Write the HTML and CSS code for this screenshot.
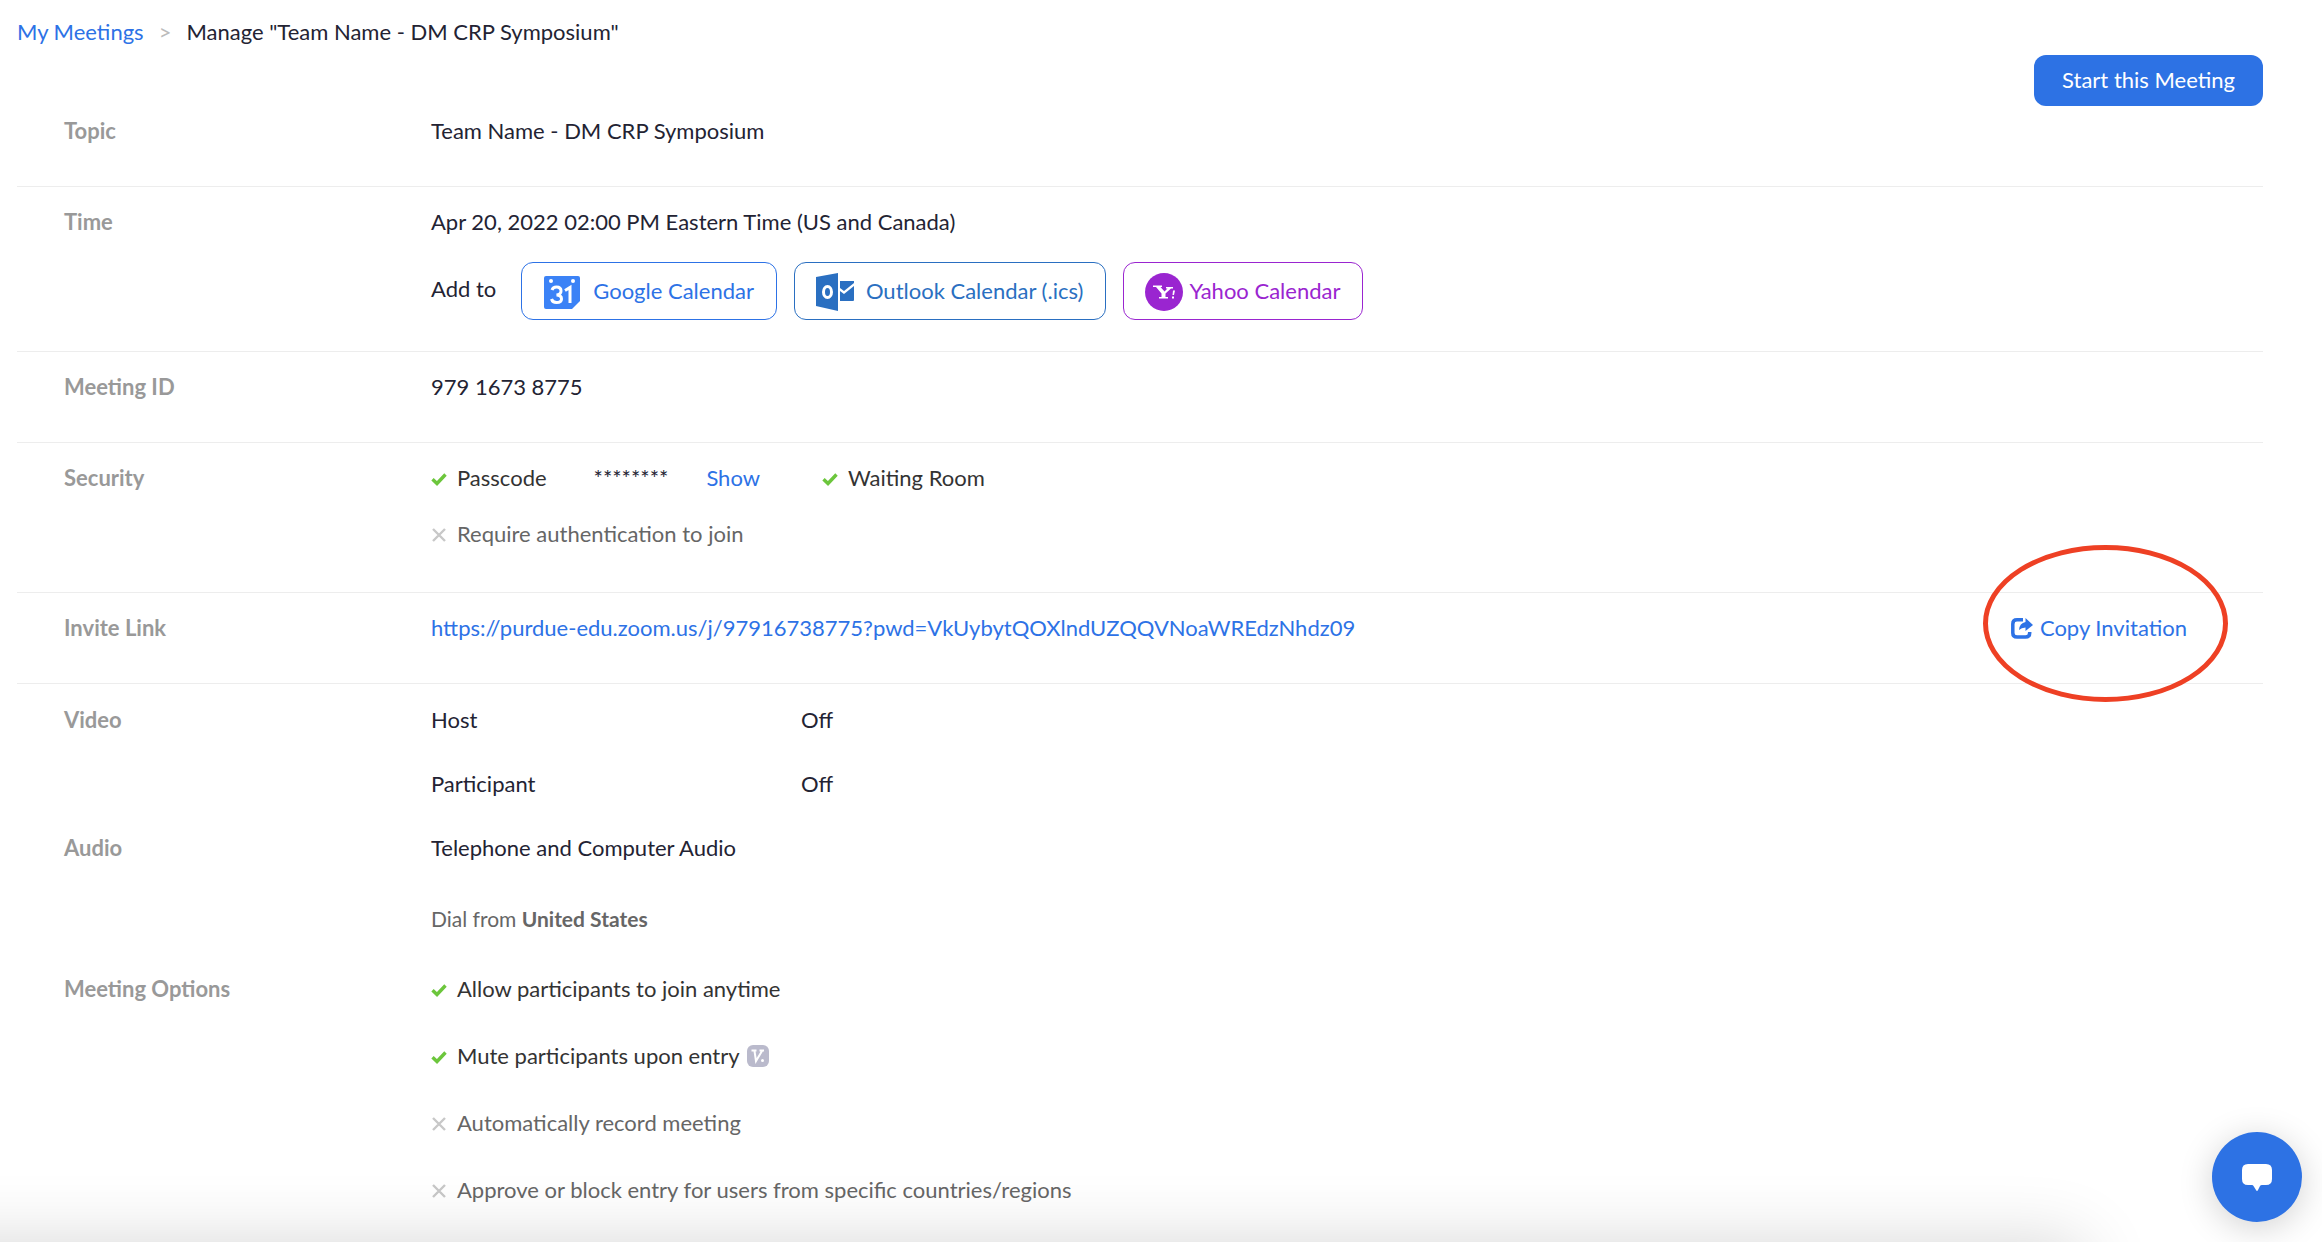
FILE: index.html
```html
<!DOCTYPE html>
<html lang="en">
<head>
<meta charset="utf-8">
<meta name="viewport" content="width=device-width, initial-scale=1">
<title>Manage Meeting</title>
<link rel="stylesheet" href="styles.css">
</head>
<body>
<svg class="sprite" aria-hidden="true">
  <symbol id="check" viewBox="0 0 16 14"><path d="M1.500 7.200L6 11.500L14.500 2.500" fill="none" stroke="#6cc63c" stroke-width="3.400"/></symbol>
  <symbol id="cross" viewBox="0 0 16 14"><path d="M2 1L14 13M14 1L2 13" fill="none" stroke="#c8c8c8" stroke-width="2.400"/></symbol>
</svg>
<main class="page">
  <nav class="breadcrumb" aria-label="Breadcrumb">
    <a href="#">My Meetings</a>
    <span class="separator">&gt;</span>
    <span>Manage "Team Name - DM CRP Symposium"</span>
  </nav>

  <section class="row row-topic">
    <h2 class="label">Topic</h2>
    <div class="value">Team Name - DM CRP Symposium</div>
    <button class="start" type="button">Start this Meeting</button>
  </section>

  <section class="row row-time">
    <h2 class="label">Time</h2>
    <div class="value">
      <div>Apr 20, 2022 02:00 PM Eastern Time (US and Canada)</div>
      <div class="calendars">
        <span class="add-to">Add to</span>
        <button class="calendar google" type="button">
          <svg width="38" height="38" viewBox="0 0 38 38" aria-hidden="true"><path d="M3 3H35Q37 3 37 5V28L29 36H3Q1 36 1 34V5Q1 3 3 3Z" fill="#3b82f6"/><circle cx="8" cy="8" r="2" fill="#fff"/><circle cx="30" cy="8" r="2" fill="#fff"/><path d="M9 17Q10 14 13.500 14Q18 14 18 18Q18 21.500 13.500 22Q18.500 22 18.500 26Q18.500 29.500 13.500 29.500Q9.500 29.500 8.500 26M22 17.500L27 14.500V30" fill="none" stroke="#fff" stroke-width="3"/></svg>
          Google Calendar
        </button>
        <button class="calendar outlook" type="button">
          <svg width="38" height="38" viewBox="0 0 38 38" aria-hidden="true"><path d="M0 4L22 0V38L0 33Z" fill="#2a6fc1"/><ellipse cx="11.500" cy="19" rx="4" ry="5.500" fill="none" stroke="#fff" stroke-width="3"/><path d="M24 8H38V10L28 18L24 15ZM24 18L28 21L38 13V27Q38 28 37 28H24Z" fill="#2a6fc1"/></svg>
          Outlook Calendar (.ics)
        </button>
        <button class="calendar yahoo" type="button">
          <svg width="38" height="38" viewBox="0 0 38 38" aria-hidden="true"><circle cx="19" cy="19" r="19" fill="#9a25d0"/><path d="M8 12.500H17V14H15.500L19.500 18.500L22.500 15.500H21V14H28V15.500H26L20.500 20.500V24H23V25.500H14V24H16.500V20.500L11 14H8Z" fill="#fff"/><path d="M28 17.500H30L29 22H27.500ZM27 23.500H29V25.500H27Z" fill="#fff"/></svg>
          Yahoo Calendar
        </button>
      </div>
    </div>
  </section>

  <section class="row">
    <h2 class="label">Meeting ID</h2>
    <div class="value">979 1673 8775</div>
  </section>

  <section class="row row-security">
    <h2 class="label">Security</h2>
    <div class="value security">
      <div class="security-line">
        <span class="option"><svg class="mark"><use href="#check"/></svg>Passcode</span>
        <span class="stars">********</span>
        <a class="show" href="#">Show</a>
        <span class="option"><svg class="mark"><use href="#check"/></svg>Waiting Room</span>
      </div>
      <div class="option off"><svg class="mark"><use href="#cross"/></svg>Require authentication to join</div>
    </div>
  </section>

  <section class="row">
    <h2 class="label">Invite Link</h2>
    <div class="value"><a href="#">https://purdue-edu.zoom.us/j/97916738775?pwd=VkUybytQOXlndUZQQVNoaWREdzNhdz09</a></div>
    <div class="copy-wrap">
      <button class="copy" type="button">
        <svg width="22" height="21" viewBox="0 0 22 21" aria-hidden="true"><path d="M12 1.800H6Q1.800 1.800 1.800 6V15Q1.800 19 6 19H14.500Q18.700 19 18.700 15V14" fill="none" stroke="currentColor" stroke-width="3.500"/><path d="M14.500 0L22 7L14.500 13V9.500Q10.500 9.500 8 12Q8.500 5 14.500 4Z" fill="currentColor"/></svg>
        Copy Invitation
      </button>
      <svg class="highlight" width="245" height="157" viewBox="0 0 245 157" aria-hidden="true"><ellipse cx="122.500" cy="78.500" rx="120" ry="76" fill="none" stroke="#ee4024" stroke-width="5"/></svg>
    </div>
  </section>

  <section class="row row-plain">
    <h2 class="label">Video</h2>
    <dl class="value pairs">
      <dt>Host</dt><dd>Off</dd>
      <dt>Participant</dt><dd>Off</dd>
    </dl>
  </section>

  <section class="row row-plain row-audio">
    <h2 class="label">Audio</h2>
    <div class="value audio">
      <div>Telephone and Computer Audio</div>
      <div class="dial">Dial from <strong>United States</strong></div>
    </div>
  </section>

  <section class="row row-plain">
    <h2 class="label">Meeting Options</h2>
    <ul class="value options">
      <li class="option"><svg class="mark"><use href="#check"/></svg>Allow participants to join anytime</li>
      <li class="option"><svg class="mark"><use href="#check"/></svg>Mute participants upon entry
        <svg class="badge" viewBox="0 0 22 22" aria-hidden="true"><rect width="22" height="22" rx="6" fill="#babacc"/><path d="M4.500 5.500H9.500M7.500 6L9 16L15 6M12.500 5.500H17" fill="none" stroke="#fff" stroke-width="2"/><circle cx="15.500" cy="15.500" r="1.500" fill="#fff"/></svg></li>
      <li class="option off"><svg class="mark"><use href="#cross"/></svg>Automatically record meeting</li>
      <li class="option off"><svg class="mark"><use href="#cross"/></svg>Approve or block entry for users from specific countries/regions</li>
    </ul>
  </section>
</main>
<div class="bottom-shadow"></div>
<button class="chat" type="button" aria-label="Chat">
  <svg width="30" height="27" viewBox="0 0 30 27" aria-hidden="true"><path d="M6 0H24Q30 0 30 6V15Q30 21 24 21H20Q18.500 21 18 22L16 26Q15 28 14 26L11.500 22Q11 21 10 21H6Q0 21 0 15V6Q0 0 6 0Z" fill="#fff"/></svg>
</button>
</body>
</html>
```
FILE: styles.css
```css
* { box-sizing: border-box; }

body {
  margin: 0;
  background: #fff;
  color: #232333;
  font: 22px/32px Lato, sans-serif;
}

a { color: #2d72e6; text-decoration: none; }
button { font: inherit; cursor: pointer; }
.sprite { position: absolute; width: 0; height: 0; }

.page { padding: 16px 59px 0 17px; }

.breadcrumb { display: flex; gap: 15px; margin-bottom: 7px; }
.separator { color: #bbb; }

.row {
  display: grid;
  grid-template-columns: 367px 1fr auto;
  padding: 19px 0 39px 47px;
  border-bottom: 1px solid #ededed;
}
.label { margin: 0; font-size: 22px; font-weight: 700; color: #999; }
.value { margin: 0; padding: 0; }

.row-topic { padding-top: 0; }
.row-topic .label, .row-topic .value { padding-top: 60px; }
.start {
  align-self: start;
  height: 51px;
  padding: 0 28px 2px;
  border: 0;
  border-radius: 12px;
  background: #2d72e4;
  color: #fff;
}

.row-time { padding-bottom: 31px; }
.calendars { display: flex; gap: 17px; margin-top: 24px; }
.add-to { margin-right: 8px; padding-top: 11px; }
.calendar {
  display: flex;
  align-items: center;
  gap: 12px;
  height: 58px;
  padding: 0 22px 0 21px;
  border: 1px solid;
  border-radius: 12px;
  background: #fff;
}
.calendar svg { margin-top: 2px; }
.google { color: #2d72e6; }
.outlook { color: #2a6fc1; }
.yahoo { gap: 6px; color: #9a25d0; }

.row-security { padding-bottom: 42px; }
.security { display: grid; gap: 24px; }
.security-line { display: flex; }
.option { display: flex; align-items: center; color: #333; }
.off { color: #666; }
.mark { width: 16px; height: 14px; margin: 2px 10px 0 0; }
.stars { margin-left: 47px; }
.show { margin: 0 62px 0 38px; }

.copy-wrap { position: relative; margin-right: 76px; }
.copy {
  display: flex;
  align-items: center;
  gap: 7px;
  padding: 0;
  border: 0;
  background: none;
  color: #2d72e6;
}
.highlight { position: absolute; left: -28px; top: -67px; pointer-events: none; }

.row-plain { padding-top: 20px; padding-bottom: 12px; border: 0; }
.row-audio { padding-bottom: 19px; }
.pairs { display: grid; grid-template-columns: 370px 1fr; row-gap: 32px; }
.pairs dd { margin: 0; }
.audio { display: grid; gap: 40px; }
.dial { font-size: 21px; line-height: 30px; color: #666; }
.options { display: grid; gap: 35px; list-style: none; }
.badge { width: 22px; height: 22px; margin-left: 7px; }

/* Sits just below the window, so only its soft shadow shows */
.bottom-shadow {
  position: fixed;
  top: 100%;
  left: -100px;
  right: 239px;
  height: 100px;
  box-shadow: 0 0 70px rgba(0, 0, 0, .16);
  pointer-events: none;
}
.chat {
  position: fixed;
  right: 20px;
  bottom: 20px;
  display: grid;
  place-items: center;
  width: 90px;
  height: 90px;
  border: 0;
  border-radius: 50%;
  background: #2d72e4;
  box-shadow: 0 6px 34px rgba(0, 0, 0, .18);
}
```
